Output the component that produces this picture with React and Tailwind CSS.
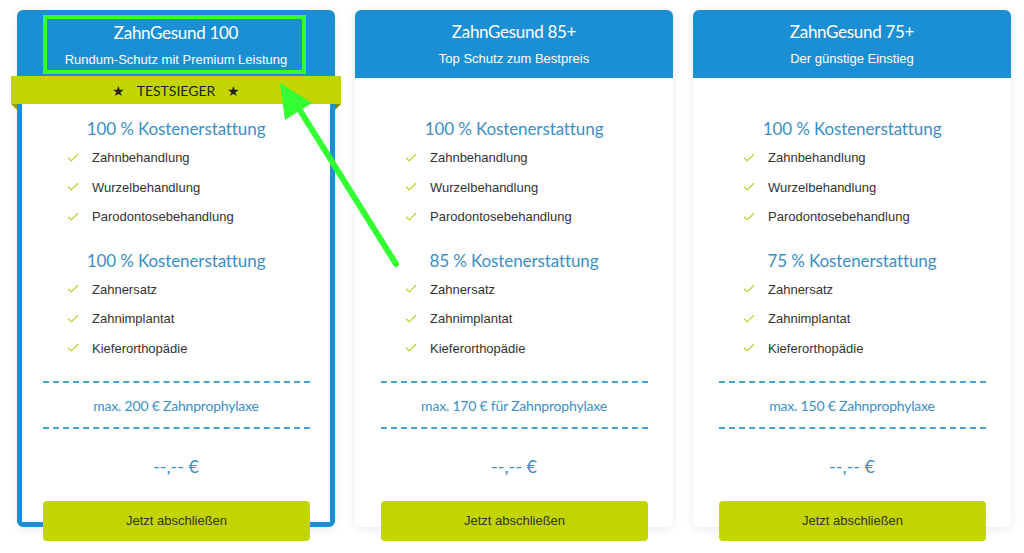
import React from "react";
import { Check } from "lucide-react";

const plans = [
  {
    name: "ZahnGesund 100",
    tagline: "Rundum-Schutz mit Premium Leistung",
    second: "100 % Kostenerstattung",
    prophylaxe: "max. 200 € Zahnprophylaxe",
    winner: true,
  },
  {
    name: "ZahnGesund 85+",
    tagline: "Top Schutz zum Bestpreis",
    second: "85 % Kostenerstattung",
    prophylaxe: "max. 170 € für Zahnprophylaxe",
  },
  {
    name: "ZahnGesund 75+",
    tagline: "Der günstige Einstieg",
    second: "75 % Kostenerstattung",
    prophylaxe: "max. 150 € Zahnprophylaxe",
  },
];

const heading =
  "font-['Lato',sans-serif] text-[17px] tracking-[-0.1px] leading-6 text-[#3b8fc7] text-center";

const Item = ({ children }) => (
  <li className="flex items-center h-[29.5px] pl-[27px]">
    <Check size={14} strokeWidth={2} className="text-[#bccf2a] shrink-0" />
    <span className="ml-[12px] text-[13px] text-[#333] font-['Liberation_Sans',Arial,sans-serif]">
      {children}
    </span>
  </li>
);

const PlanCard = ({ plan }) => {
  const border = plan.winner ? "border-[5px] border-[#1b8fd4]" : "";
  return (
    <div
      className={`relative flex flex-col bg-white rounded-[6px] shadow-[0_2px_10px_rgba(0,0,0,0.08)] ${border}`}
    >
      {/* Header */}
      <div
        className={`bg-[#1b8fd4] text-white text-center ${
          plan.winner ? "h-[61px] pt-[7px]" : "h-[68px] pt-[11px] rounded-t-[6px]"
        }`}
      >
        <div className="font-['Lato',sans-serif] text-[17px] tracking-[-0.3px] leading-[22px]">
          {plan.name}
        </div>
        <div className="mt-[7px] text-[13px] leading-[18px] font-['Liberation_Sans',Arial,sans-serif]">
          {plan.tagline}
        </div>
      </div>

      {plan.winner ? (
        <div className="relative -mx-[11px] h-[28px] bg-[#c3d500] flex items-center justify-center font-['Lato',sans-serif] text-[14px] text-[#222]">
          <span className="mr-[12px] text-[14px]">★</span>
          TESTSIEGER
          <span className="ml-[12px] text-[14px]">★</span>
          <span className="absolute left-0 top-full w-0 h-0 border-t-[6px] border-t-[#9aa400] border-l-[6px] border-l-transparent" />
          <span className="absolute right-0 top-full w-0 h-0 border-t-[6px] border-t-[#7f8a00] border-r-[6px] border-r-transparent" />
        </div>
      ) : null}

      {/* Body */}
      <div className={plan.winner ? "mt-[13px] -mx-[5px]" : "mt-[39px]"}>
        <h3 className={heading}>100 % Kostenerstattung</h3>
        <ul className="mt-[2px] pl-[22px]">
          <Item>Zahnbehandlung</Item>
          <Item>Wurzelbehandlung</Item>
          <Item>Parodontosebehandlung</Item>
        </ul>

        <h3 className={`${heading} mt-[17px]`}>{plan.second}</h3>
        <ul className="mt-[2px] pl-[22px]">
          <Item>Zahnersatz</Item>
          <Item>Zahnimplantat</Item>
          <Item>Kieferorthopädie</Item>
        </ul>

        <div className="ml-[26px] mr-[25px] mt-[18px] border-t-2 border-dashed border-[#45a3d3]" />
        <p className="mt-[13px] text-center text-[14px] tracking-[-0.2px] leading-5 text-[#3b8fc7] font-['Lato',sans-serif]">
          {plan.prophylaxe}
        </p>
        <div className="ml-[26px] mr-[25px] mt-[11px] border-t-2 border-dashed border-[#45a3d3]" />

        <p className="mt-[23px] text-center text-[18px] leading-7 text-[#3b8fc7] font-['Lato',sans-serif]">
          --,-- €
        </p>

        <button
          className={`relative z-10 block ml-[26px] mr-[25px] w-[calc(100%-51px)] mt-[21px] h-[40px] rounded-[4px] bg-[#c3d500] text-[13px] text-[#333] font-['Liberation_Sans',Arial,sans-serif] ${
            plan.winner ? "-mb-[19px]" : "-mb-[14px]"
          }`}
        >
          Jetzt abschließen
        </button>
      </div>
    </div>
  );
};

export default function App() {
  return (
    <div className="relative w-[1024px] h-[553px] bg-white overflow-hidden">
      <div className="grid grid-cols-[318px_318px_318px] gap-x-[20px] pl-[17px] pt-[10px]">
        {plans.map((p) => (
          <PlanCard key={p.name} plan={p} />
        ))}
      </div>

      {/* Annotation overlay */}
      <svg className="absolute inset-0 pointer-events-none z-20" width="1024" height="553">
        <rect x="45" y="17" width="259" height="55" fill="none" stroke="#33ff33" strokeWidth="4" />
        <line x1="396" y1="264" x2="296" y2="104" stroke="#33ff33" strokeWidth="6" strokeLinecap="round" />
        <polygon points="280,83 285,120 312,103" fill="#33ff33" />
      </svg>
    </div>
  );
}
